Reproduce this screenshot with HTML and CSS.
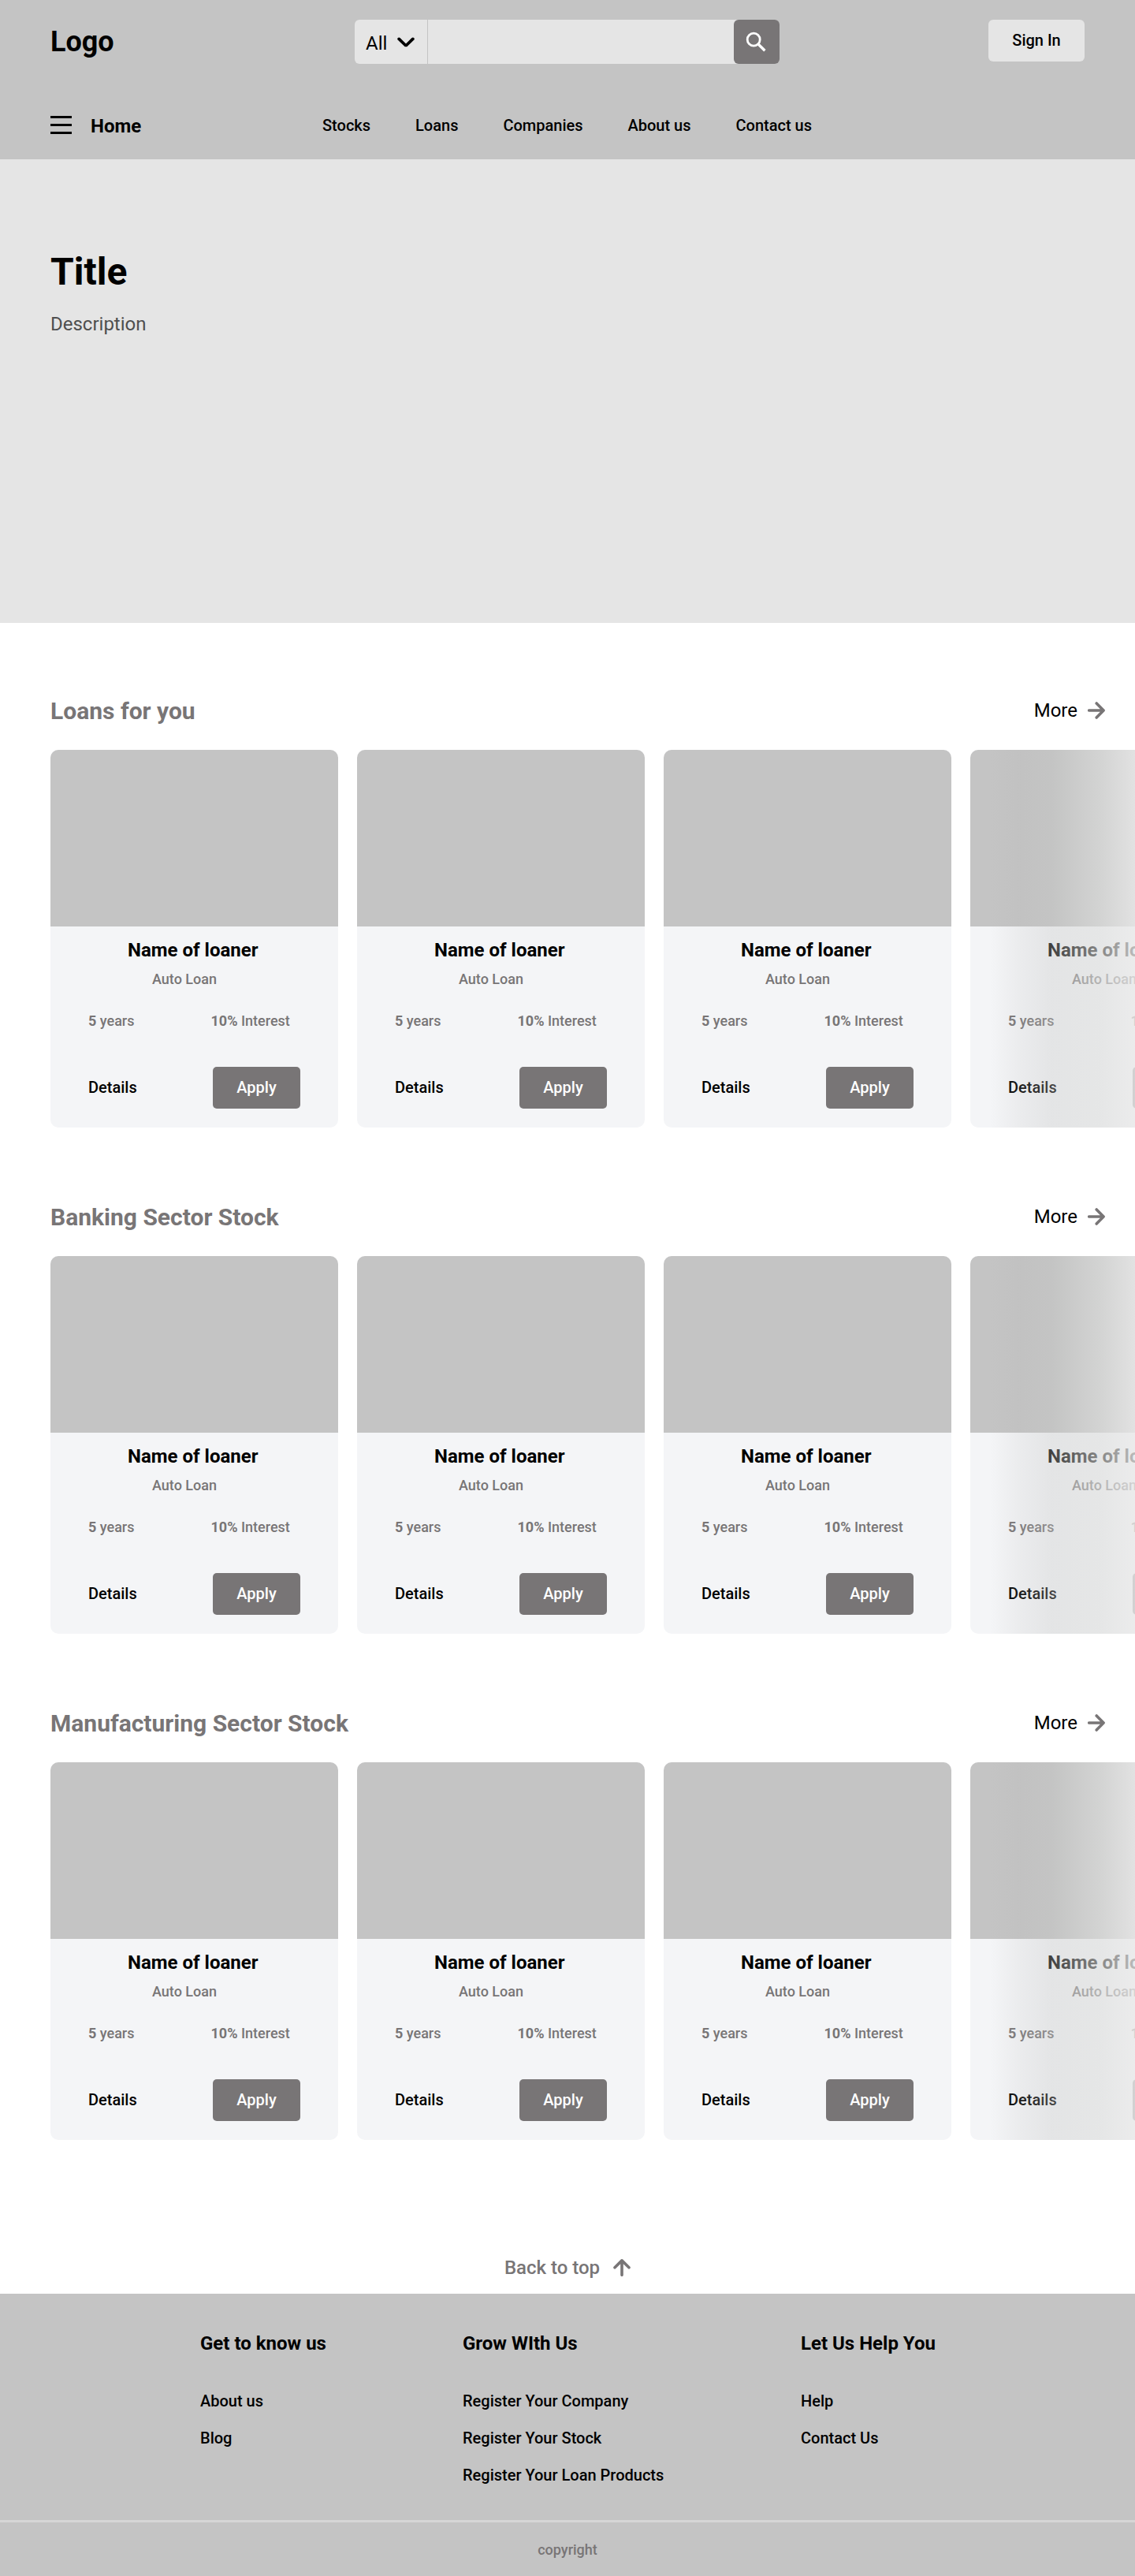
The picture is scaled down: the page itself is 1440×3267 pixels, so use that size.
FILE: index.html
```html
<!DOCTYPE html>
<html lang="en">
<head>
<meta charset="utf-8">
<title>Home</title>
<link rel="stylesheet" href="styles.css">
</head>
<body>
<header class="header">
  <div class="topbar">
    <a class="logo">Logo</a>
    <form class="search">
      <div class="search-filter">All
        <svg width="22" height="14" viewBox="0 0 22 14"><path d="M2.2 2.4 11 11 19.8 2.4" fill="none" stroke="#000" stroke-width="3.8" stroke-linecap="round" stroke-linejoin="bevel"/></svg>
      </div>
      <div class="search-input"></div>
      <div class="search-button">
        <svg width="26" height="26" viewBox="0 0 26 26" fill="none" stroke="#fff"><circle cx="10.2" cy="10.2" r="8" stroke-width="2.8"/><path d="M15.8 15.8 24.4 24.2" stroke-width="3.4"/></svg>
      </div>
    </form>
    <a class="signin">Sign In</a>
  </div>
  <div class="navbar">
    <div class="menu"><span></span><span></span><span></span></div>
    <a class="home">Home</a>
    <nav class="nav"><a>Stocks</a><a>Loans</a><a>Companies</a><a>About us</a><a>Contact us</a></nav>
  </div>
</header>
<section class="hero">
  <h1>Title</h1>
  <p>Description</p>
</section>
<main id="sections"></main>
<a class="back">Back to top
  <svg width="22" height="22" viewBox="0 0 22 22"><path d="M11 20.3V2M2 10.8 11 1.9 20 10.8" fill="none" stroke="#787576" stroke-width="3.6" stroke-linecap="round" stroke-linejoin="round"/></svg>
</a>
<footer class="footer">
  <div class="columns">
    <div class="column know"><h3>Get to know us</h3><a>About us</a><a>Blog</a></div>
    <div class="column grow"><h3>Grow WIth Us</h3><a>Register Your Company</a><a>Register Your Stock</a><a>Register Your Loan Products</a></div>
    <div class="column"><h3>Let Us Help You</h3><a>Help</a><a>Contact Us</a></div>
  </div>
  <div class="copyright">copyright</div>
</footer>
<script src="script.js"></script>
</body>
</html>
```
FILE: script.js
```js
const card = `<article class="card">
  <div class="card-image"></div>
  <h3>Name of loaner</h3>
  <p class="kind">Auto Loan</p>
  <div class="terms"><span><b>5</b> years</span><span class="interest"><b>10%</b> Interest</span></div>
  <div class="actions"><a>Details</a><a class="apply">Apply</a></div>
</article>`;

document.getElementById('sections').innerHTML =
  ['Loans for you', 'Banking Sector Stock', 'Manufacturing Sector Stock'].map(title => `
<section class="listing">
  <div class="listing-head">
    <h2>${title}</h2>
    <a class="more">More
      <svg width="22" height="22" viewBox="0 0 22 22"><path d="M1.7 11H20M11.2 2 20.1 11 11.2 20" fill="none" stroke="#787576" stroke-width="3.6" stroke-linecap="round" stroke-linejoin="round"/></svg>
    </a>
  </div>
  <div class="cards">${card.repeat(4)}</div>
</section>`).join('');
```
FILE: styles.css
```css
* { box-sizing: border-box; }
body { margin: 0; background: #fff; color: #000; font: 500 20px/23px Roboto, sans-serif; overflow-x: hidden; }
h1, h2, h3, p { margin: 0; }
svg { display: block; flex: none; }

.header { height: 202px; background: #c4c4c4; padding: 25px 64px 0; }
.topbar { display: flex; align-items: flex-start; height: 122px; }
.logo { width: 386px; padding-top: 7px; font-size: 36px; line-height: 42px; font-weight: 700; }
.search { display: flex; width: 539px; height: 56px; margin: 0; background: #e5e5e5; border-radius: 6px; }
.search-filter { display: flex; align-items: center; gap: 13px; width: 93px; padding: 4px 0 0 14px; font-size: 24px; font-weight: 400; border-right: 1px solid #c4c4c4; }
.search-filter svg { margin-top: -2px; }
.search-input { flex: 1; }
.search-button { width: 58px; padding: 15px 0 0 15px; background: #787576; border-radius: 6px; }
.signin { width: 122px; height: 53px; margin-left: auto; background: #e5e5e5; border-radius: 6px; text-align: center; line-height: 53px; }

.navbar { display: flex; align-items: flex-start; }
.menu { display: flex; flex-direction: column; gap: 7px; width: 27px; }
.menu span { height: 3px; background: #000; }
.home { width: 294px; margin-left: 24px; font-size: 24px; line-height: 26px; font-weight: 700; }
.nav { display: flex; gap: 57px; padding-top: 1px; }

.hero { height: 588px; padding: 111px 64px 0; background: #e5e5e5; }
.hero h1 { font-size: 48px; line-height: 64px; font-weight: 700; }
.hero p { margin-top: 20px; font-size: 24px; line-height: 28px; font-weight: 400; color: #4f4f4f; }

.listing { height: 642px; padding: 94px 0 0 64px; overflow: hidden; }
.listing-head { display: flex; justify-content: space-between; height: 67px; padding-right: 38px; }
.listing-head h2 { font-size: 30px; line-height: 36px; font-weight: 700; color: #787576; }
.more { display: flex; gap: 13px; font-size: 24px; line-height: 34px; font-weight: 400; }
.more svg { margin-top: 6px; }
.cards { display: flex; gap: 24px; position: relative; }
.cards::after { content: ""; position: absolute; top: 0; right: 0; width: 184px; height: 479px; background: linear-gradient(90deg, rgba(180,180,180,0) 0, rgba(180,180,180,.14) 20%, rgba(196,197,196,.34) 43%, rgba(220,221,220,.61) 76%, rgba(233,233,233,.8) 100%); }
.card { flex: none; width: 365px; height: 479px; border-radius: 10px; background: #f4f5f7; overflow: hidden; }
.card-image { height: 224px; background: #c4c4c4; }
.card h3 { margin: 15px 0 0 98px; font-size: 24px; line-height: 30px; font-weight: 700; white-space: nowrap; }
.kind { margin: 11px 0 0 129px; font-size: 18px; line-height: 22px; color: #787576; }
.terms { display: flex; margin: 31px 0 0 48px; font-size: 18px; line-height: 22px; color: #787576; }
.terms b { font-weight: 700; }
.interest { margin-left: 97px; }
.actions { display: flex; justify-content: space-between; margin: 47px 48px 0; line-height: 53px; }
.apply { width: 111px; border-radius: 5px; background: #787576; color: #fff; text-align: center; }

.back { display: flex; justify-content: center; gap: 17px; height: 193px; padding-top: 146px; font-size: 24px; line-height: 28px; color: #787576; }
.back svg { margin-top: 3px; }

.footer { height: 358px; background: #c4c4c4; }
.columns { display: flex; height: 287px; padding: 49px 0 0 254px; }
.column { display: flex; flex-direction: column; align-items: flex-start; gap: 24px; }
.column h3 { margin-bottom: 24px; font-size: 24px; line-height: 28px; font-weight: 700; }
.know { width: 333px; }
.grow { width: 429px; }
.copyright { border-top: 3px solid #d6d6d6; padding-top: 24px; text-align: center; font-size: 18px; line-height: 22px; color: #787576; }
```
